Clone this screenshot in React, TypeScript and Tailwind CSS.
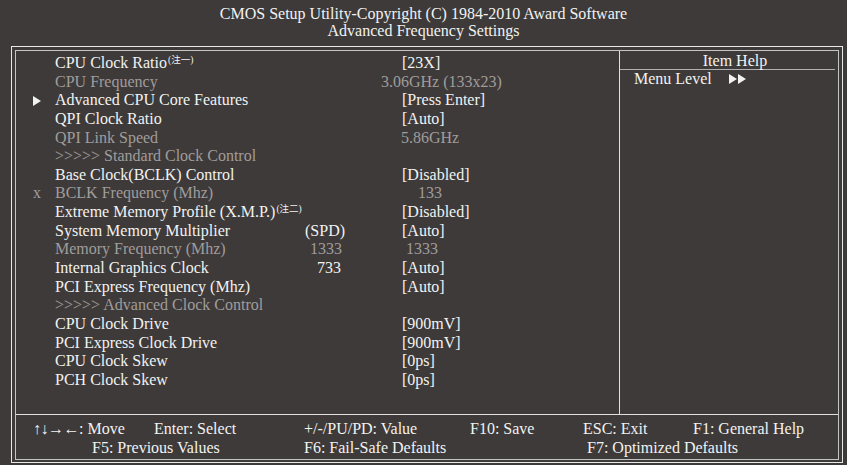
import React from "react";

type Row = {
  mark?: "tri" | "x";
  label: string;
  sup?: string;
  dim?: boolean;
  mid?: string;
  midPad?: string;
  value?: string;
  valPad?: string;
};

const rows: Row[] = [
  { label: "CPU Clock Ratio", sup: "(注一)", value: "[23X]", valPad: "pl-[21px]" },
  { label: "CPU Frequency", dim: true, value: "3.06GHz (133x23)", valPad: "pl-0" },
  { mark: "tri", label: "Advanced CPU Core Features", value: "[Press Enter]", valPad: "pl-[21px]" },
  { label: "QPI Clock Ratio", value: "[Auto]", valPad: "pl-[21px]" },
  { label: "QPI Link Speed", dim: true, value: "5.86GHz", valPad: "pl-[20px]" },
  { label: ">>>>> Standard Clock Control", dim: true },
  { label: "Base Clock(BCLK) Control", value: "[Disabled]", valPad: "pl-[21px]" },
  { mark: "x", label: "BCLK Frequency (Mhz)", dim: true, value: "133", valPad: "pl-[37px]" },
  { label: "Extreme Memory Profile (X.M.P.)", sup: "(注二)", value: "[Disabled]", valPad: "pl-[21px]" },
  { label: "System Memory Multiplier", mid: "(SPD)", midPad: "pl-[5px]", value: "[Auto]", valPad: "pl-[21px]" },
  { label: "Memory Frequency (Mhz)", dim: true, mid: "1333", midPad: "pl-[10px]", value: "1333", valPad: "pl-[25px]" },
  { label: "Internal Graphics Clock", mid: "733", midPad: "pl-[17px]", value: "[Auto]", valPad: "pl-[21px]" },
  { label: "PCI Express Frequency (Mhz)", value: "[Auto]", valPad: "pl-[21px]" },
  { label: ">>>>> Advanced Clock Control", dim: true },
  { label: "CPU Clock Drive", value: "[900mV]", valPad: "pl-[21px]" },
  { label: "PCI Express Clock Drive", value: "[900mV]", valPad: "pl-[21px]" },
  { label: "CPU Clock Skew", value: "[0ps]", valPad: "pl-[21px]" },
  { label: "PCH Clock Skew", value: "[0ps]", valPad: "pl-[21px]" },
];

function Tri({ className }: { className?: string }) {
  return (
    <svg width="8" height="10" viewBox="0 0 8 10" className={className}>
      <polygon points="0,0 8,5 0,10" fill="#f2f2f2" />
    </svg>
  );
}

export default function App() {
  return (
    <div
      className="w-[847px] h-[465px] bg-[#3d3a39] text-[#f2f2f2] text-[16px] overflow-hidden"
      style={{ fontFamily: '"Liberation Serif", "Noto Sans CJK SC", serif' }}
    >
      <div className="pt-[5px] text-center leading-[17px]">
        <div>CMOS Setup Utility-Copyright (C) 1984-2010 Award Software</div>
        <div>Advanced Frequency Settings</div>
      </div>
      <div className="mt-[7px] ml-[11px] w-[832px] h-[417px] border border-[#e8e8e8] p-[3px]">
        <div className="w-[824px] h-[410px] border border-[#c4c4c4] flex flex-col">
          <div className="h-[363px] flex">
            <div className="w-[604px] border-r border-[#e0e0e0] pt-[3px]">
              {rows.map((r, i) => (
                <div
                  key={i}
                  className={`flex h-[18.65px] leading-[18.65px] whitespace-nowrap ${r.dim ? "text-[#a09d9c]" : "text-[#f2f2f2]"}`}
                >
                  <div className="w-[39px] pl-[17px] flex items-center">
                    {r.mark === "tri" && <Tri />}
                    {r.mark === "x" && <span>x</span>}
                  </div>
                  <div className="w-[245px]">
                    {r.label}
                    {r.sup && (
                      <span className="relative -top-[5px] ml-[1px] text-[9.5px] leading-none">
                        {r.sup}
                      </span>
                    )}
                  </div>
                  <div className={`w-[81px] ${r.midPad ?? ""}`}>{r.mid}</div>
                  <div className={r.valPad ?? ""}>{r.value}</div>
                </div>
              ))}
            </div>
            <div className="w-[217px] flex flex-col">
              <div className="h-[19px] leading-[20px] text-center pl-[15px] mr-[2px] border-b border-[#b0b0b0]">
                Item Help
              </div>
              <div className="flex items-center pl-[14px] h-[18px] leading-[18px]">
                <span>Menu Level</span>
                <span className="flex ml-[17px] gap-[1px]">
                  <Tri />
                  <Tri />
                </span>
              </div>
            </div>
          </div>
          <div className="h-[45px] border-t border-[#e0e0e0] pt-[4px] leading-[19px] whitespace-nowrap">
            <div className="flex pl-[17px]">
              <span className="w-[121px] tracking-[-0.5px]">↑↓→←<span className="tracking-normal">: Move</span></span>
              <span className="w-[150px]">Enter: Select</span>
              <span className="w-[166px]">+/-/PU/PD: Value</span>
              <span className="w-[113px]">F10: Save</span>
              <span className="w-[110px]">ESC: Exit</span>
              <span>F1: General Help</span>
            </div>
            <div className="flex pl-[76px]">
              <span className="w-[212px]">F5: Previous Values</span>
              <span className="w-[283px]">F6: Fail-Safe Defaults</span>
              <span>F7: Optimized Defaults</span>
            </div>
          </div>
        </div>
      </div>
    </div>
  );
}
